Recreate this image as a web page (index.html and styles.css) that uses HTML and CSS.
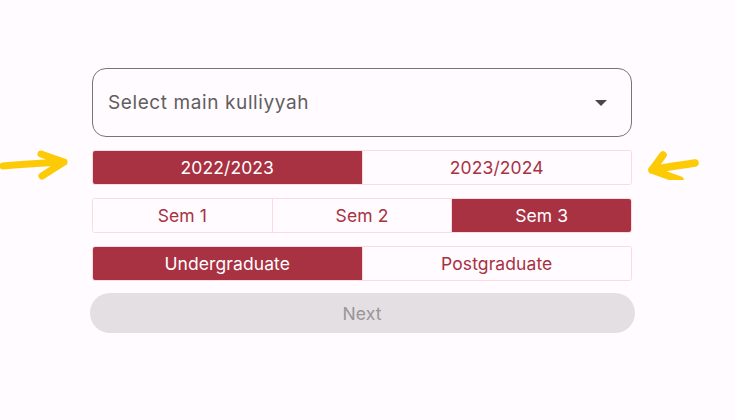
FILE: index.html
```html
<!DOCTYPE html>
<html>
<head>
<meta charset="utf-8">
<link rel="stylesheet" href="styles.css">
</head>
<body>
<main class="form">
  <div class="select">
    <span class="select-label">Select main kulliyyah</span>
    <svg class="caret" width="12" height="6" viewBox="0 0 12 6"><path d="M0 0h12L6 6z" fill="#4b4749"/></svg>
  </div>
  <div class="seg">
    <div class="opt on">2022/2023</div>
    <div class="opt">2023/2024</div>
  </div>
  <div class="seg">
    <div class="opt">Sem 1</div>
    <div class="opt">Sem 2</div>
    <div class="opt on">Sem 3</div>
  </div>
  <div class="seg">
    <div class="opt on">Undergraduate</div>
    <div class="opt">Postgraduate</div>
  </div>
  <button class="next">Next</button>
</main>
<svg class="mark mark-left" width="80" height="40" viewBox="0 0 80 40">
  <path d="M3 26 C24 24 44 23 64 22 M41 14 L64 22 L42 36" fill="none" stroke="#fdcb05" stroke-width="7" stroke-linecap="round" stroke-linejoin="round"/>
</svg>
<svg class="mark mark-right" width="80" height="40" viewBox="0 0 80 40">
  <path d="M51 23 C38 25 20 27 8 30 M19 15 L8 30 L36 40" fill="none" stroke="#fdcb05" stroke-width="7.5" stroke-linecap="round" stroke-linejoin="round"/>
</svg>
</body>
</html>
```
FILE: styles.css
```css
html, body {
  margin: 0;
  padding: 0;
  background: #fffbfe;
  width: 734px;
  height: 420px;
  overflow: hidden;
  font-family: Inter, "Noto Sans", sans-serif;
}
.form {
  width: 540px;
  margin: 68px 0 0 92px;
  display: flex;
  flex-direction: column;
}
.select {
  box-sizing: border-box;
  height: 69px;
  border: 1px solid #7d7376;
  border-radius: 14px;
  display: flex;
  align-items: center;
  justify-content: space-between;
  padding: 0 24px 0 15px;
  margin-bottom: 13px;
}
.select-label {
  font-size: 19px;
  letter-spacing: 0.6px;
  color: #625d60;
}
.caret { display: block; }
.seg {
  box-sizing: border-box;
  height: 35px;
  display: flex;
  border: 1px solid #fcdadd;
  border-radius: 3px;
  margin-bottom: 13px;
  overflow: hidden;
}
.opt {
  flex: 1;
  display: flex;
  align-items: center;
  justify-content: center;
  font-size: 17.5px;
  letter-spacing: 0.1px;
  color: #a83142;
  background: #fffbfe;
}
.opt + .opt { border-left: 1px solid #fcdadd; }
.opt.on {
  background: #a83142;
  color: #ffffff;
}
.next {
  align-self: center;
  width: 545px;
  height: 40px;
  margin-top: -1px;
  border: none;
  border-radius: 20px;
  background: #e3dfe2;
  color: #9a9598;
  font-family: Inter, "Noto Sans", sans-serif;
  font-size: 17.5px;
  letter-spacing: 0.1px;
  padding: 0;
}
.mark { position: absolute; }
.mark-left { left: 0; top: 140px; }
.mark-right { left: 644px; top: 140px; }
```
